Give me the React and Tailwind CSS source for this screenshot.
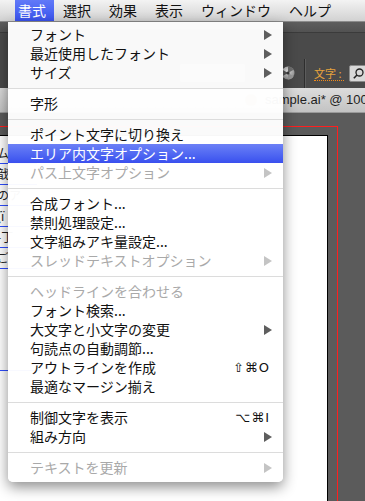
import React from 'react';

const menuTitles = ['選択', '効果', '表示', 'ウィンドウ', 'ヘルプ'];

const items = [
  { t: 'フォント', sub: true },
  { t: '最近使用したフォント', sub: true },
  { t: 'サイズ', sub: true },
  'sep',
  { t: '字形' },
  'sep',
  { t: 'ポイント文字に切り換え' },
  { t: 'エリア内文字オプション...', active: true },
  { t: 'パス上文字オプション', sub: true, disabled: true },
  'sep',
  { t: '合成フォント...' },
  { t: '禁則処理設定...' },
  { t: '文字組みアキ量設定...' },
  { t: 'スレッドテキストオプション', sub: true, disabled: true },
  'sep',
  { t: 'ヘッドラインを合わせる', disabled: true },
  { t: 'フォント検索...' },
  { t: '大文字と小文字の変更', sub: true },
  { t: '句読点の自動調節...' },
  { t: 'アウトラインを作成', key: '⇧⌘O' },
  { t: '最適なマージン揃え' },
  'sep',
  { t: '制御文字を表示', key: '⌥⌘I' },
  { t: '組み方向', sub: true },
  'sep',
  { t: 'テキストを更新', sub: true, disabled: true },
];

// bits of the document that peek out left of the menu
const docLines = ['ム', '戠', 'のア', '(ï', '-丁', 'ご'];

const Arrow = ({ color }) => (
  <svg width="8" height="10" viewBox="0 0 8 10" className="shrink-0">
    <polygon points="0,0 8,5 0,10" fill={color} />
  </svg>
);

const ColorWheel = () => (
  <svg width="14" height="14" viewBox="0 0 14 14">
    <defs>
      <radialGradient id="wheel" cx="40%" cy="35%" r="70%">
        <stop offset="0%" stopColor="#f2f2f2" />
        <stop offset="100%" stopColor="#8a8a8a" />
      </radialGradient>
    </defs>
    <circle cx="7" cy="7" r="6.5" fill="url(#wheel)" />
    <path d="M7 7 L7 0.5 A6.5 6.5 0 0 1 12.6 3.8 Z" fill="#6f6f6f" />
    <path d="M7 7 L12.6 10.2 A6.5 6.5 0 0 1 7 13.5 Z" fill="#9a9a9a" />
    <path d="M7 7 L1.4 10.2 A6.5 6.5 0 0 1 1.4 3.8 Z" fill="#5e5e5e" />
    <circle cx="7" cy="7" r="1.6" fill="#3c3c3c" />
  </svg>
);

const Magnifier = () => (
  <svg width="11" height="11" viewBox="0 0 11 11">
    <circle cx="6.5" cy="4.5" r="3.5" fill="none" stroke="#222" strokeWidth="1.3" />
    <line x1="4" y1="7" x2="0.8" y2="10.2" stroke="#222" strokeWidth="1.6" />
  </svg>
);

export default function App() {
  return (
    <div className="relative w-[365px] h-[501px] overflow-hidden flex flex-col bg-[#5b5b5b] font-['Noto_Sans_CJK_JP',sans-serif]">
      {/* Menu bar */}
      <div className="h-[22px] shrink-0 flex items-center pl-[15px] bg-gradient-to-b from-[#f3f3f3] to-[#d2d2d2] border-b border-[#8c8c8c] text-[14px] leading-[21px] text-[#111]">
        <span className="h-[21px] pl-[3px] pr-[8px] bg-gradient-to-b from-[#6179f8] to-[#3a52ee] text-white">書式</span>
        {menuTitles.map((title, i) => (
          <span key={title} className={i === 0 ? 'ml-[9px]' : 'ml-[18px]'}>
            {title}
          </span>
        ))}
      </div>

      {/* Toolbar */}
      <div className="h-[11px] shrink-0 bg-gradient-to-b from-[#5e5e5e] to-[#525252] border-b border-[#3b3b3b]" />
      <div className="h-[25px] shrink-0 bg-[#4a4a4a]" />
      <div className="h-[30px] shrink-0 bg-[#4a4a4a] flex items-center overflow-hidden">
        <div className="shrink-0 ml-[180px] w-[65px] h-[18px] rounded-[2px] bg-[#8e8e8e]" />
        <div className="shrink-0 ml-[36px] flex items-center">
          <ColorWheel />
        </div>
        <div className="shrink-0 ml-[9px] w-[2px] h-[29px] border-l border-[#2e2e2e] border-r border-r-[#5c5c5c]" />
        <span className="shrink-0 ml-[8px] whitespace-nowrap text-[11px] leading-[14px] text-[#e6a23c] border-b border-dotted border-[#f08a1c] pr-[2px]">
          文字 :
        </span>
        <div className="shrink-0 ml-[5px] h-[17px] w-[20px] flex items-center pl-[3px] bg-[#d9d9d9] border border-[#8a8a8a] rounded-l-[2px]">
          <Magnifier />
        </div>
      </div>

      {/* Document tab */}
      <div className="h-[25px] shrink-0 flex items-center overflow-hidden bg-gradient-to-b from-[#dcdcdc] to-[#c3c3c3] border-b border-[#9a9a9a]">
        <div className="shrink-0 ml-[245px] w-[12px] h-[12px] rounded-full bg-[#b5a888]" />
        <span className="shrink-0 ml-[8px] whitespace-nowrap text-[13px] text-[#1e1e1e] font-['Liberation_Sans',sans-serif]">
          sample.ai* @ 100% (CMYK/プレビュー)
        </span>
      </div>

      {/* Canvas with bleed and artboard */}
      <div className="flex-1 min-h-0 flex flex-col pt-[13px]">
        <div className="w-[338px] flex-1 flex flex-col border-t border-r border-[#ff1f1f] pt-[8px] pr-[9px]">
          <div className="flex-1 bg-white border-t border-r border-black pt-[7px] overflow-hidden">
            {docLines.map((line, i) => (
              <div
                key={i}
                className="h-[21px] w-[40px] -ml-[3px] border-b border-[#2e4dff] text-[12px] leading-[20px] text-[#222] whitespace-nowrap"
              >
                {line}
              </div>
            ))}
            <div className="mt-[81px] h-[21px] w-[40px] border-b border-[#2e4dff]" />
          </div>
        </div>
      </div>

      {/* Dropdown menu */}
      <div className="absolute left-[8px] top-[22px] w-[275px] pt-[3px] pb-[5px] bg-white/[0.97] rounded-b-[5px] shadow-[0_5px_14px_rgba(0,0,0,0.45)] text-[14px]">
        {items.map((item, i) => {
          if (item === 'sep') {
            return (
              <div key={i} className="h-[12px] flex items-center">
                <div className="w-full h-px bg-[#dcdcdc]" />
              </div>
            );
          }
          const textColor = item.active ? 'text-white' : item.disabled ? 'text-[#a9a9a9]' : 'text-[#111]';
          return (
            <div
              key={i}
              className={`h-[19px] flex items-center pl-[22px] pr-[11px] leading-[19px] ${textColor} ${
                item.active ? 'bg-gradient-to-b from-[#6c80f6] to-[#3a4fee]' : ''
              }`}
            >
              <span className="flex-1 whitespace-nowrap">{item.t}</span>
              {item.key && (
                <span className="pr-[2px] tracking-[1px] text-[13px] font-['DejaVu_Sans',sans-serif]">{item.key}</span>
              )}
              {item.sub && <Arrow color={item.disabled ? '#c4c4c4' : '#5e5e5e'} />}
            </div>
          );
        })}
      </div>
    </div>
  );
}
